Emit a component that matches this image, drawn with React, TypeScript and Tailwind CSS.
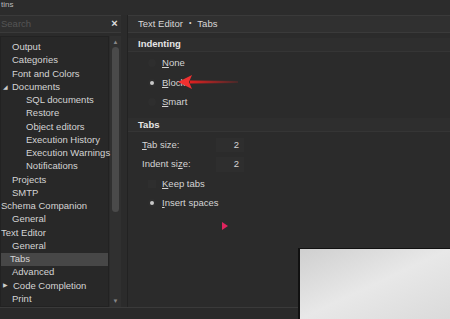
import { useState } from "react";

type Node = { label: string; indent: number; arrow?: "open" | "closed"; selected?: boolean };

const tree: Node[] = [
  { label: "Output", indent: 11 },
  { label: "Categories", indent: 11 },
  { label: "Font and Colors", indent: 11 },
  { label: "Documents", indent: 11, arrow: "open" },
  { label: "SQL documents", indent: 25 },
  { label: "Restore", indent: 25 },
  { label: "Object editors", indent: 25 },
  { label: "Execution History", indent: 25 },
  { label: "Execution Warnings", indent: 25 },
  { label: "Notifications", indent: 25 },
  { label: "Projects", indent: 11 },
  { label: "SMTP", indent: 11 },
  { label: "Schema Companion", indent: 0 },
  { label: "General", indent: 11 },
  { label: "Text Editor", indent: 0 },
  { label: "General", indent: 11 },
  { label: "Tabs", indent: 9, selected: true },
  { label: "Advanced", indent: 11 },
  { label: "Code Completion", indent: 12, arrow: "closed" },
  { label: "Print", indent: 11 },
];

function Radio({ on }: { on?: boolean }) {
  return (
    <span className="flex h-[8px] w-[8px] items-center justify-center rounded-full bg-[#2e2e2e]">
      {on && <span className="h-[4px] w-[4px] rounded-full bg-[#c8c8c8]" />}
    </span>
  );
}

function Check() {
  return <span className="h-[8px] w-[8px] bg-[#2e2e2e]" />;
}

export default function App() {
  const [indent, setIndent] = useState("block");

  return (
    <div
      className="relative flex h-[319px] w-[450px] flex-col overflow-hidden bg-[#2b2b2b] text-[9.5px] text-[#d4d4d4]"
      style={{ fontFamily: "'Liberation Sans', Arial, sans-serif" }}
    >
      {/* window title */}
      <div className="h-[17px] bg-[#2c2c2c]">
        <div className="pl-[1px] text-[8px] leading-[9px] text-[#bbbbbb]">tins</div>
      </div>

      <div className="flex flex-1">
        {/* left */}
        <div className="flex w-[121px] flex-col">
          <div className="flex h-[18px] items-center border-y border-[#3a3a3a] bg-[#2f2f2f]">
            <div className="flex-1 pl-[1px] text-[#555555]">Search</div>
            <div className="w-[13px] text-center text-[11px] font-bold leading-none text-[#e0e0e0]">×</div>
          </div>
          <div className="mt-[3px] flex flex-1">
            <div className="w-[109px] border border-[#222222] bg-[#282828] pt-[4px]">
              {tree.map((n, i) => (
                <div
                  key={i}
                  className={`relative flex h-[13.25px] items-center whitespace-nowrap ${n.selected ? "bg-[#474747]" : ""}`}
                  style={{ paddingLeft: n.indent }}
                >
                  {n.arrow && (
                    <span className="absolute left-[2px] text-[6px] text-[#cccccc]">
                      {n.arrow === "open" ? "◢" : "▶"}
                    </span>
                  )}
                  {n.label}
                </div>
              ))}
            </div>
            <div className="ml-[1px] flex w-[11px] flex-col items-center bg-[#303030] py-[2px]">
              <span className="text-[6px] leading-[8px] text-[#888888]">▲</span>
              <div className="mt-[1px] h-[165px] w-[7px] rounded-sm bg-[#4a4a4a]" />
              <div className="flex-1" />
              <span className="text-[6px] leading-[8px] text-[#888888]">▼</span>
            </div>
          </div>
        </div>

        {/* right */}
        <div className="ml-[6px] flex flex-1 flex-col border-l border-[#222222]">
          <div className="flex h-[18px] items-center gap-[6px] border-y border-[#3a3a3a] bg-[#303030] pl-[10px] text-[#d8d8d8]">
            <span>Text Editor</span>
            <span className="text-[7px]">•</span>
            <span>Tabs</span>
          </div>

          <div className="flex flex-1 flex-col">
            <div className="mt-[5px] flex h-[14px] items-center border-b border-[#353535] bg-[#2e2e2e] pl-[10px] font-bold text-[#e6e6e6]">
              Indenting
            </div>
            <div className="flex flex-col pl-[20px] pt-[2px]">
              {[
                ["none", "None"],
                ["block", "Block"],
                ["smart", "Smart"],
              ].map(([k, l]) => (
                <div
                  key={k}
                  className="flex h-[19.5px] cursor-default items-center gap-[6px]"
                  onClick={() => setIndent(k)}
                >
                  <Radio on={indent === k} />
                  <span>
                    <span className="underline decoration-[#d4d4d4] underline-offset-1">{l[0]}</span>
                    {l.slice(1)}
                  </span>
                </div>
              ))}
            </div>

            <div className="mt-[6px] flex h-[14px] items-center border-b border-[#353535] bg-[#2e2e2e] pl-[10px] font-bold text-[#e6e6e6]">
              Tabs
            </div>
            <div className="flex flex-col pl-[14px] pt-[3px]">
              <div className="flex h-[19.5px] items-center">
                <span className="w-[74px]">
                  <span className="underline underline-offset-1">T</span>ab size:
                </span>
                <span className="w-[28px] bg-[#2e2e2e] pr-[5px] text-right">2</span>
              </div>
              <div className="flex h-[19.5px] items-center">
                <span className="w-[74px]">
                  Indent si<span className="underline underline-offset-1">z</span>e:
                </span>
                <span className="w-[28px] bg-[#2e2e2e] pr-[5px] text-right">2</span>
              </div>
              <div className="flex h-[19.5px] items-center gap-[6px] pl-[6px]">
                <Check />
                <span>
                  <span className="underline underline-offset-1">K</span>eep tabs
                </span>
              </div>
              <div className="flex h-[19.5px] items-center gap-[6px] pl-[6px]">
                <Radio on />
                <span>
                  <span className="underline underline-offset-1">I</span>nsert spaces
                </span>
              </div>
            </div>
            <div className="ml-[94px] mt-[9px] h-0 w-0 border-y-[4px] border-l-[6px] border-y-transparent border-l-[#e0245e]" />
          </div>
        </div>
      </div>

      {/* bottom strip */}
      <div className="h-[14px] border-t border-[#3a3a3a] bg-[#2a2a2a]" />

      {/* red annotation arrow */}
      <svg className="absolute left-[176px] top-[73px]" width="64" height="18" viewBox="0 0 64 18">
        <defs>
          <linearGradient id="tail" x1="0" x2="1" y1="0" y2="0">
            <stop offset="0" stopColor="#e02020" />
            <stop offset="1" stopColor="#e02020" stopOpacity="0.15" />
          </linearGradient>
        </defs>
        <path d="M14 7.5 L62 8 L62 10 L14 10.5 Z" fill="url(#tail)" />
        <path d="M2 9 L16 2 L13 9 L16 16 Z" fill="#f03030" />
      </svg>

      {/* light watermark block */}
      <div className="absolute left-[298px] top-[248px] h-[71px] w-[152px] border-l-2 border-t border-[#111111] bg-gradient-to-br from-[#cfcfcf] via-[#e8e8e8] to-[#dadada]" />
    </div>
  );
}
